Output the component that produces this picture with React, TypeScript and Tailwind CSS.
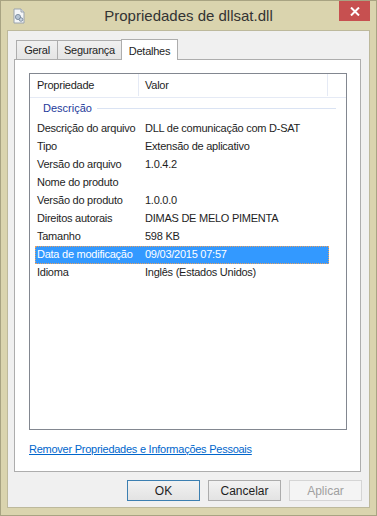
import { useState } from 'react'

type Row = { name: string; value: string }

const rows: Row[] = [
  { name: 'Descrição do arquivo', value: 'DLL de comunicação com D-SAT' },
  { name: 'Tipo', value: 'Extensão de aplicativo' },
  { name: 'Versão do arquivo', value: '1.0.4.2' },
  { name: 'Nome do produto', value: '' },
  { name: 'Versão do produto', value: '1.0.0.0' },
  { name: 'Direitos autorais', value: 'DIMAS DE MELO PIMENTA' },
  { name: 'Tamanho', value: '598 KB' },
  { name: 'Data de modificação', value: '09/03/2015 07:57' },
  { name: 'Idioma', value: 'Inglês (Estados Unidos)' },
]

function FileIcon() {
  return (
    <svg width="16" height="16" viewBox="0 0 16 16">
      <path d="M3 1h7l3 3v11H3z" fill="#f4f6f8" stroke="#9aa3ad" />
      <path d="M10 1v3h3" fill="#dfe4ea" stroke="#9aa3ad" />
      <circle cx="7" cy="9" r="2.6" fill="#b6c4d4" stroke="#6f8296" strokeWidth="0.8" />
      <circle cx="10" cy="11.5" r="1.8" fill="#c9d3de" stroke="#6f8296" strokeWidth="0.8" />
    </svg>
  )
}

export default function App() {
  const [selected, setSelected] = useState(7)
  const tabs = [
    { label: 'Geral', w: 'w-[42px]' },
    { label: 'Segurança', w: 'w-[65px]' },
    { label: 'Detalhes', w: 'w-[57px]' },
  ]

  return (
    <div className="w-[377px] h-[516px] bg-[#dad4ae] border border-[#a8a382] flex flex-col font-['Liberation_Sans',sans-serif] text-[11px] tracking-[-0.25px] text-[#1e1e1e] overflow-hidden">
      {/* Barra de título */}
      <div className="h-[29px] flex-shrink-0 relative flex items-center justify-center">
        <div className="absolute left-[10px] top-[7px]">
          <FileIcon />
        </div>
        <span className="text-[15px] tracking-normal text-[#333] mt-[1px]">Propriedades de dllsat.dll</span>
        <button className="absolute right-[6px] top-0 w-[31px] h-[20px] bg-[#c75050] flex items-center justify-center">
          <svg width="10" height="9" viewBox="0 0 10 9">
            <path d="M1 0.5l8 8M9 0.5l-8 8" stroke="#fff" strokeWidth="2" />
          </svg>
        </button>
      </div>

      {/* Área cliente */}
      <div className="flex-1 mx-[6px] mb-[7px] bg-[#f0f0f0] border border-[#bdb99c] flex flex-col">
        <div className="pl-[6px] pr-[7px] pt-[7px] flex flex-col">
          {/* Abas */}
          <div className="flex items-end h-[21px] pl-[2px]">
            {tabs.map((t, i) =>
              i === 2 ? (
                <div
                  key={t.label}
                  className={`${t.w} h-[21px] bg-white border border-b-0 border-[#adadad] flex justify-center items-start pt-[3px] -mb-px relative z-10`}
                >
                  {t.label}
                </div>
              ) : (
                <div
                  key={t.label}
                  className={`${t.w} h-[19px] border border-b-0 border-[#adadad] -mr-px flex justify-center items-center pt-[1px] bg-gradient-to-b from-[#f0f0f0] to-[#e5e5e5]`}
                >
                  {t.label}
                </div>
              )
            )}
          </div>

          {/* Painel */}
          <div className="h-[413px] mr-[1px] bg-white border border-[#adadad] flex flex-col pl-[14px] pr-[13px] pt-[13px]">
            {/* Lista */}
            <div className="h-[357px] border border-[#828790] flex flex-col">
              <div className="h-[24px] flex border-b border-[#e5eaf5] text-[#1e1e1e] pb-[1px]">
                <div className="w-[109px] pl-[7px] flex items-center border-r border-[#e5eaf5]">Propriedade</div>
                <div className="w-[189px] pl-[6px] flex items-center border-r border-[#e5eaf5]">Valor</div>
                <div className="flex-1" />
              </div>

              <div className="flex items-center h-[20px] pb-[2px] mt-[1px] pl-[13px] pr-[10px]">
                <span className="text-[#1e3a9a] tracking-normal">Descrição</span>
                <div className="flex-1 ml-[5px] border-t border-[#dae3f3]" />
              </div>

              <div className="flex flex-col pl-[5px] pr-[17px] mt-[1px]">
                {rows.map((r, i) => {
                  const isSel = i === selected
                  return (
                    <div
                      key={r.name}
                      onClick={() => setSelected(i)}
                      className={
                        isSel
                          ? 'h-[18px] flex items-center pb-[1px] bg-[#3399ff] text-white outline-1 outline-dotted outline-[#e8a060] -outline-offset-1'
                          : 'h-[18px] flex items-center pb-[1px]'
                      }
                    >
                      <div className="w-[110px] pl-[2px] whitespace-nowrap overflow-hidden">{r.name}</div>
                      <div className="flex-1 whitespace-nowrap">{r.value}</div>
                    </div>
                  )
                })}
              </div>
            </div>

            <a className="mt-[11px] text-[#0066cc] underline whitespace-nowrap self-start" href="#">
              Remover Propriedades e Informações Pessoais
            </a>
          </div>

          {/* Botões */}
          <div className="flex justify-end gap-[8px] mt-[8px]">
            <button className="w-[73px] h-[21px] border border-[#3c7fb1] bg-gradient-to-b from-[#f2f2f2] to-[#e3e3e3] text-[#1e1e1e] text-[12px] tracking-normal">
              OK
            </button>
            <button className="w-[73px] h-[21px] border border-[#acacac] bg-gradient-to-b from-[#f2f2f2] to-[#e3e3e3] text-[#1e1e1e] text-[12px] tracking-normal">
              Cancelar
            </button>
            <button className="w-[73px] h-[21px] border border-[#d5d5d5] bg-[#f4f4f4] text-[#a0a0a0] text-[12px] tracking-normal">
              Aplicar
            </button>
          </div>
        </div>
      </div>
    </div>
  )
}
